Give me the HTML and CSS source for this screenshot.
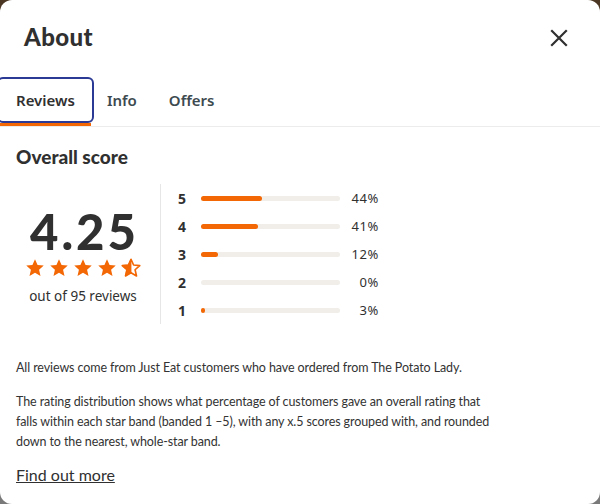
FILE: index.html
```html
<!DOCTYPE html>
<html>
<head>
<meta charset="utf-8">
<link rel="stylesheet" href="styles.css">
</head>
<body>
<div class="dialog">
  <header class="header">
    <h1 class="title">About</h1>
    <button class="close" aria-label="Close">
      <svg width="18" height="18" viewBox="0 0 18 18"><path d="M2 2 L16 16 M16 2 L2 16" stroke="#303030" stroke-width="2.2" stroke-linecap="square" fill="none"/></svg>
    </button>
  </header>
  <nav class="tabs">
    <div class="tab active"><span class="tab-label">Reviews</span><span class="tab-bar"></span></div>
    <div class="tab"><span class="tab-label">Info</span><span class="tab-bar"></span></div>
    <div class="tab"><span class="tab-label">Offers</span><span class="tab-bar"></span></div>
  </nav>
  <main class="content">
    <h2 class="section-title">Overall score</h2>
    <div class="score">
      <div class="score-left">
        <div class="score-value">4.25</div>
        <div class="stars">
          <svg class="star" viewBox="0 0 24 24"><path d="M12 1.5l3.1 6.9 7.4.7-5.6 5 1.7 7.4L12 17.6l-6.6 3.9 1.7-7.4-5.6-5 7.4-.7z" fill="#f36805"/></svg>
          <svg class="star" viewBox="0 0 24 24"><path d="M12 1.5l3.1 6.9 7.4.7-5.6 5 1.7 7.4L12 17.6l-6.6 3.9 1.7-7.4-5.6-5 7.4-.7z" fill="#f36805"/></svg>
          <svg class="star" viewBox="0 0 24 24"><path d="M12 1.5l3.1 6.9 7.4.7-5.6 5 1.7 7.4L12 17.6l-6.6 3.9 1.7-7.4-5.6-5 7.4-.7z" fill="#f36805"/></svg>
          <svg class="star" viewBox="0 0 24 24"><path d="M12 1.5l3.1 6.9 7.4.7-5.6 5 1.7 7.4L12 17.6l-6.6 3.9 1.7-7.4-5.6-5 7.4-.7z" fill="#f36805"/></svg>
          <svg class="star" viewBox="0 0 24 24">
            <defs><clipPath id="half"><rect x="0" y="0" width="12.5" height="24"/></clipPath></defs>
            <path d="M12 1.5l3.1 6.9 7.4.7-5.6 5 1.7 7.4L12 17.6l-6.6 3.9 1.7-7.4-5.6-5 7.4-.7z" fill="#ffffff" stroke="#f36805" stroke-width="2" stroke-linejoin="round"/>
            <path d="M12 1.5l3.1 6.9 7.4.7-5.6 5 1.7 7.4L12 17.6l-6.6 3.9 1.7-7.4-5.6-5 7.4-.7z" fill="#f36805" stroke="#f36805" stroke-width="1" clip-path="url(#half)"/>
          </svg>
        </div>
        <div class="score-count">out of 95 reviews</div>
      </div>
      <div class="score-bars">
        <div class="bar-row"><span class="bar-num">5</span><span class="bar-track"><span class="bar-fill" style="width:44%"></span></span><span class="bar-pct">44%</span></div>
        <div class="bar-row"><span class="bar-num">4</span><span class="bar-track"><span class="bar-fill" style="width:41%"></span></span><span class="bar-pct">41%</span></div>
        <div class="bar-row"><span class="bar-num">3</span><span class="bar-track"><span class="bar-fill" style="width:12%"></span></span><span class="bar-pct">12%</span></div>
        <div class="bar-row"><span class="bar-num">2</span><span class="bar-track"><span class="bar-fill" style="width:0%"></span></span><span class="bar-pct">0%</span></div>
        <div class="bar-row"><span class="bar-num">1</span><span class="bar-track"><span class="bar-fill" style="width:3%"></span></span><span class="bar-pct">3%</span></div>
      </div>
    </div>
    <p class="text first">All reviews come from Just Eat customers who have ordered from The Potato Lady.</p>
    <p class="text">The rating distribution shows what percentage of customers gave an overall rating that falls within each star band (banded 1 –5), with any x.5 scores grouped with, and rounded down to the nearest, whole-star band.</p>
    <a class="more" href="#">Find out more</a>
  </main>
</div>
</body>
</html>
```

FILE: styles.css
```css
* { box-sizing: border-box; }
html, body { margin: 0; padding: 0; }
body {
  width: 600px;
  height: 504px;
  background: linear-gradient(to bottom, #4a3622 0%, #5a4030 20%, #6e6e6e 80%, #7a7a7a 100%);
  font-family: "Noto Sans", sans-serif;
  color: #303030;
  overflow: hidden;
}
.dialog {
  width: 600px;
  height: 504px;
  background: #ffffff;
  border-radius: 12px;
  overflow: hidden;
  display: flex;
  flex-direction: column;
}
.header {
  height: 72px;
  padding: 0 32px 0 24px;
  display: flex;
  align-items: center;
  justify-content: space-between;
}
.title {
  margin: 0;
  font-family: "Lato", sans-serif;
  font-weight: 900;
  font-size: 24px;
  color: #303030;
  letter-spacing: 0.4px;
}
.close {
  background: none;
  border: 0;
  padding: 0;
  width: 18px;
  height: 18px;
  margin-top: 4px;
  display: flex;
}
.tabs {
  display: flex;
  padding-top: 8px;
  border-bottom: 1px solid #ececec;
}
.tab {
  display: flex;
  flex-direction: column;
}
.tab-label {
  height: 40px;
  padding: 0 16px;
  display: flex;
  align-items: center;
  font-size: 15px;
  font-weight: 600;
  color: #3d4a50;
}
.tab.active .tab-label {
  color: #303030;
  outline: 2px solid #2b3a94;
  outline-offset: 1px;
  border-radius: 3px;
}
.tab-bar {
  height: 3px;
  margin-top: 3px;
  background: transparent;
}
.tab.active .tab-bar { background: #f36805; }
.content {
  padding: 18px 16px 0 16px;
}
.section-title {
  margin: 0;
  font-family: "Lato", sans-serif;
  font-weight: 900;
  font-size: 19px;
  color: #303030;
}
.score {
  display: flex;
  margin-top: 16px;
}
.score-left {
  width: 134px;
  display: flex;
  flex-direction: column;
  align-items: center;
  justify-content: center;
  margin-right: 10px;
  padding-top: 4px;
}
.score-value {
  font-family: "Lato", sans-serif;
  font-weight: 900;
  font-size: 49px;
  line-height: 46px;
  color: #303030;
  letter-spacing: 3px;
  margin-right: -3px;
}
.stars {
  display: flex;
  gap: 4px;
  margin-top: 4px;
}
.star { width: 20px; height: 20px; display: block; }
.score-count {
  margin-top: 9px;
  font-size: 13.5px;
  color: #303030;
}
.score-bars {
  border-left: 1px solid #e6e6e6;
  padding-left: 17px;
  display: flex;
  flex-direction: column;
}
.bar-row {
  height: 28px;
  display: flex;
  align-items: center;
}
.bar-num {
  width: 23px;
  font-size: 14px;
  font-weight: 700;
  color: #303030;
}
.bar-track {
  width: 139px;
  height: 5px;
  border-radius: 3px;
  background: #f1eee9;
  display: flex;
}
.bar-fill {
  height: 5px;
  border-radius: 3px;
  background: #f36805;
}
.bar-pct {
  width: 39px;
  text-align: right;
  font-size: 13px;
  color: #303030;
  letter-spacing: 0.6px;
}
.text {
  margin: 14px 0 0 0;
  max-width: 488px;
  font-family: "Lato", sans-serif;
  font-size: 12.5px;
  letter-spacing: -0.1px;
  line-height: 20px;
  color: #333333;
}
.text.first { margin-top: 34px; }
.more {
  display: inline-block;
  margin-top: 13px;
  font-family: "Lato", sans-serif;
  font-size: 16px;
  color: #303030;
  text-decoration: underline;
}
```
